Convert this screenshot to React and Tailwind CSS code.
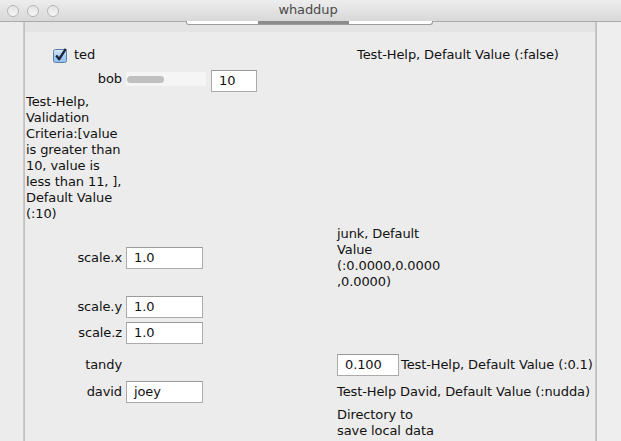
import React from 'react';

const Field = ({ value, className = '' }) => (
  <div
    className={`shrink-0 h-[22px] bg-white border border-[#ababab] border-t-[#9a9a9a] pl-[7px] flex items-center text-[#111] ${className}`}
  >
    {value}
  </div>
);

const Checkbox = () => (
  <svg width="15" height="15" viewBox="0 0 15 15" className="shrink-0">
    <defs>
      <linearGradient id="cbFill" x1="0" y1="0" x2="0" y2="1">
        <stop offset="0" stopColor="#dcebfa" />
        <stop offset="0.5" stopColor="#a9cdf2" />
        <stop offset="1" stopColor="#8fc0f0" />
      </linearGradient>
    </defs>
    <rect x="0.5" y="1.5" width="13" height="13" rx="2" fill="url(#cbFill)" stroke="#5b7ea3" />
    <path d="M3.2 7.6 L6.2 11.2 L12.8 0.8" fill="none" stroke="#1c2340" strokeWidth="2.4" strokeLinejoin="round" />
  </svg>
);

const Light = () => (
  <div className="w-[12px] h-[12px] rounded-full border border-[#b4b4b4] bg-gradient-to-b from-[#e4e4e4] to-[#f6f6f6]" />
);

export default function App() {
  return (
    <div className="relative w-[621px] h-[441px] overflow-hidden bg-[#ececec] text-[13px] tracking-[-0.1px] text-[#111] font-['DejaVu_Sans',sans-serif]">
      {/* title bar */}
      <div className="h-[22px] flex items-center border-b border-[#ababab] bg-gradient-to-b from-[#ededed] to-[#d8d8d8]">
        <div className="flex gap-[8px] pl-[7px]">
          <Light />
          <Light />
          <Light />
        </div>
        <div className="flex-1 text-center text-[#4a4a4a] pr-[64px] -mt-[1px]">whaddup</div>
      </div>

      {/* segmented tab bottom peeking out */}
      <div className="absolute left-[186px] top-[21px] w-[247px] h-[4px] flex border border-t-0 border-[#9c9c9c] rounded-b-[3px] bg-white overflow-hidden">
        <div className="w-[71px]" />
        <div className="w-[91px] bg-[#8c8c8c]" />
        <div className="flex-1" />
      </div>

      <div className="flex h-[419px]">
        <div className="w-[23px] shrink-0" />
        <div className="w-[2px] shrink-0 bg-gradient-to-r from-[#cfcfcf] to-[#bdbdbd]" />
        <div className="w-[570px] shrink-0 overflow-hidden">
          <div className="h-[10px] bg-[#e4e4e4]" />
          <div className="pl-[1px]">
            {/* ted */}
            <div className="mt-[13px] h-[20px] flex items-center">
              <div className="w-[331px] flex items-center pl-[27px]">
                <Checkbox />
                <span className="ml-[6px]">ted</span>
              </div>
              <span className="whitespace-nowrap">Test-Help, Default Value (:false)</span>
            </div>

            {/* bob */}
            <div className="mt-[5px] h-[22px] flex items-center">
              <div className="w-[96px] text-right -mt-[4px]">bob</div>
              <div className="ml-[4px] w-[80px] h-[14px] -mt-[4px] bg-[#f5f5f5] flex items-center pl-[1px]">
                <div className="w-[37px] h-[7px] rounded-full bg-[#c0c0c0]" />
              </div>
              <Field value="10" className="ml-[5px] w-[46px] h-[21px]" />
            </div>

            {/* bob help */}
            <div className="mt-[2px] leading-[16px]">
              Test-Help,
              <br />
              Validation
              <br />
              Criteria:[value
              <br />
              is greater than
              <br />
              10, value is
              <br />
              less than 11, ],
              <br />
              Default Value
              <br />
              (:10)
            </div>

            {/* scale.x */}
            <div className="mt-[4px] flex items-center">
              <div className="w-[96px] text-right">scale.x</div>
              <Field value="1.0" className="ml-[4px] w-[77px]" />
              <div className="ml-[134px] leading-[16px] whitespace-nowrap">
                junk, Default
                <br />
                Value
                <br />
                (:0.0000,0.0000
                <br />
                ,0.0000)
              </div>
            </div>

            {/* scale.y */}
            <div className="mt-[6px] flex items-center">
              <div className="w-[96px] text-right">scale.y</div>
              <Field value="1.0" className="ml-[4px] w-[77px]" />
            </div>

            {/* scale.z */}
            <div className="mt-[4px] flex items-center">
              <div className="w-[96px] text-right">scale.z</div>
              <Field value="1.0" className="ml-[4px] w-[77px]" />
            </div>

            {/* tandy */}
            <div className="mt-[10px] flex items-center">
              <div className="w-[96px] text-right">tandy</div>
              <div className="ml-[215px] flex items-center">
                <Field value="0.100" className="w-[62px] h-[21px]" />
                <span className="ml-[2px] whitespace-nowrap">Test-Help, Default Value (:0.1)</span>
              </div>
            </div>

            {/* david */}
            <div className="mt-[5px] flex items-center">
              <div className="w-[96px] text-right">david</div>
              <Field value="joey" className="ml-[4px] w-[77px]" />
              <span className="ml-[134px] whitespace-nowrap">Test-Help David, Default Value (:nudda)</span>
            </div>

            {/* directory */}
            <div className="mt-[4px] flex">
              <div className="ml-[311px] leading-[16px] whitespace-nowrap">
                Directory to
                <br />
                save local data
                <br />
                in, Default Value
              </div>
            </div>
          </div>
        </div>
        <div className="w-[2px] shrink-0 bg-gradient-to-r from-[#cdcdcd] to-[#bababa]" />
        <div className="flex-1 bg-[#eeeeee]" />
      </div>
    </div>
  );
}
